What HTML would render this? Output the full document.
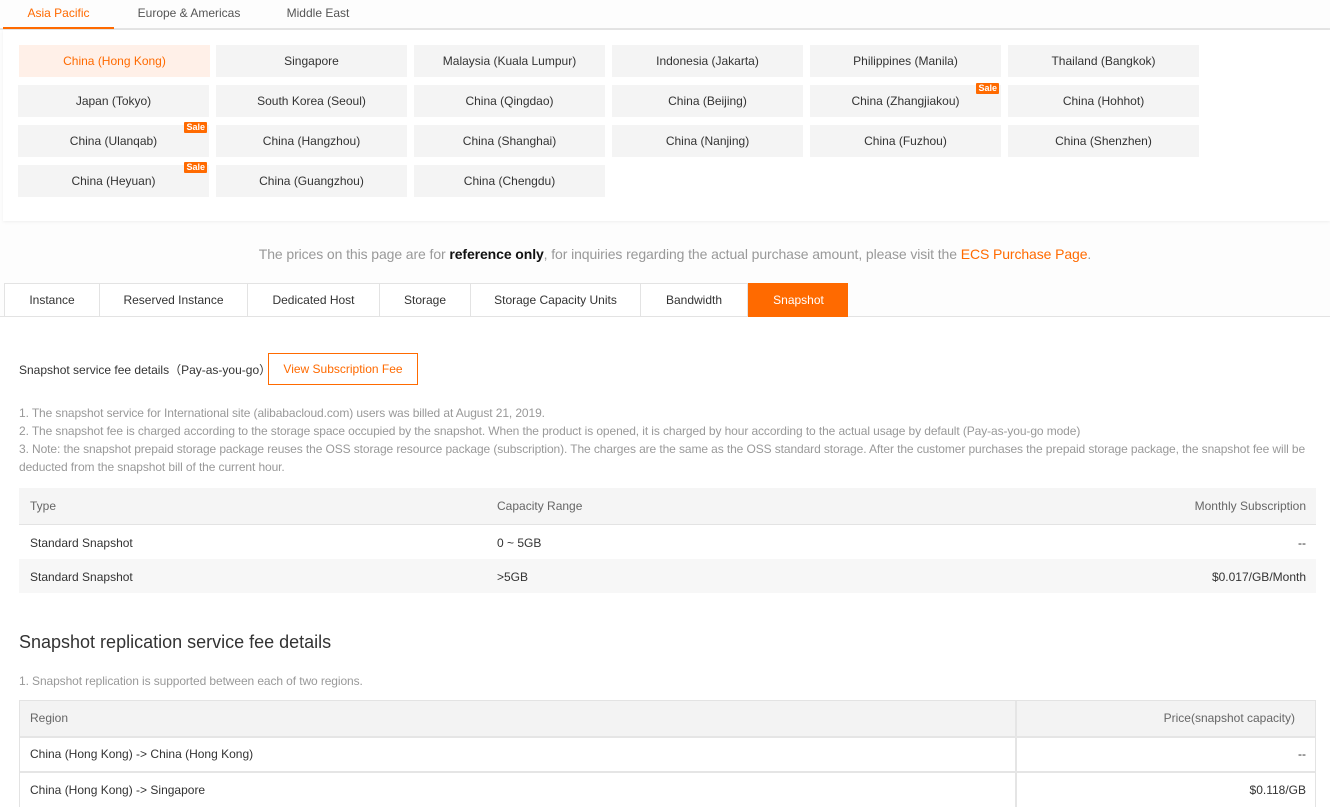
<!DOCTYPE html>
<html><head><meta charset="utf-8"><style>
*{box-sizing:border-box;margin:0;padding:0}
html,body{width:1330px;height:807px;overflow:hidden}
body{background:#fdfdfd;font-family:"Liberation Sans",sans-serif;color:#333;position:relative}
.a{position:absolute}
.rt{top:0;height:28px;font-size:12px;line-height:26px;color:#555;text-align:center}
.btn{position:absolute;width:191px;height:32px;background:#f4f4f4;font-size:12px;line-height:32px;text-align:center;color:#333}
.sale{position:absolute;right:2px;top:-3px;background:#ff6a00;color:#fff;font-size:9px;font-weight:bold;line-height:11px;padding:0 2px;border-radius:1px}
.pt{position:absolute;top:283px;height:34px;border:1px solid #e3e3e3;border-right:none;background:#fff;font-size:12px;line-height:32px;text-align:center;color:#333}
.note{position:absolute;left:19px;font-size:12px;color:#999;line-height:18px;letter-spacing:-0.1px}
</style></head><body>
<div class="a" style="left:0;top:28px;width:1330px;height:2px;background:#e5e5e5"></div>
<div class="a rt" style="left:3px;width:111px;color:#ff6a00">Asia Pacific</div>
<div class="a" style="left:3px;top:27px;width:111px;height:2px;background:#ff6a00"></div>
<div class="a rt" style="left:124px;width:130px">Europe &amp; Americas</div>
<div class="a rt" style="left:270px;width:96px">Middle East</div>
<div class="a" style="left:3px;top:30px;width:1327px;height:191px;background:#fff;box-shadow:0 1px 3px rgba(0,0,0,.06)"></div>

<div class="btn" style="left:19px;top:45px;background:#fff0e8;color:#ff6a00">China (Hong Kong)</div>
<div class="btn" style="left:216px;top:45px">Singapore</div>
<div class="btn" style="left:414px;top:45px">Malaysia (Kuala Lumpur)</div>
<div class="btn" style="left:612px;top:45px">Indonesia (Jakarta)</div>
<div class="btn" style="left:810px;top:45px">Philippines (Manila)</div>
<div class="btn" style="left:1008px;top:45px">Thailand (Bangkok)</div>

<div class="btn" style="left:18px;top:85px">Japan (Tokyo)</div>
<div class="btn" style="left:216px;top:85px">South Korea (Seoul)</div>
<div class="btn" style="left:414px;top:85px">China (Qingdao)</div>
<div class="btn" style="left:612px;top:85px">China (Beijing)</div>
<div class="btn" style="left:810px;top:85px">China (Zhangjiakou)<span class="sale" style="top:-2px">Sale</span></div>
<div class="btn" style="left:1008px;top:85px">China (Hohhot)</div>

<div class="btn" style="left:18px;top:125px">China (Ulanqab)<span class="sale">Sale</span></div>
<div class="btn" style="left:216px;top:125px">China (Hangzhou)</div>
<div class="btn" style="left:414px;top:125px">China (Shanghai)</div>
<div class="btn" style="left:612px;top:125px">China (Nanjing)</div>
<div class="btn" style="left:810px;top:125px">China (Fuzhou)</div>
<div class="btn" style="left:1008px;top:125px">China (Shenzhen)</div>

<div class="btn" style="left:18px;top:165px">China (Heyuan)<span class="sale">Sale</span></div>
<div class="btn" style="left:216px;top:165px">China (Guangzhou)</div>
<div class="btn" style="left:414px;top:165px">China (Chengdu)</div>

<div class="a" style="left:0;width:1350px;top:246px;text-align:center;font-size:14px;color:#999;letter-spacing:-0.1px">The prices on this page are for <b style="color:#111">reference only</b>, for inquiries regarding the actual purchase amount, please visit the <span style="color:#ff6a00">ECS Purchase Page</span>.</div>

<div class="a" style="left:0;top:316px;width:1330px;height:1px;background:#e3e3e3"></div>
<div class="a" style="left:0;top:317px;width:1330px;height:490px;background:#fff"></div>
<div class="pt" style="left:4px;width:95px">Instance</div>
<div class="pt" style="left:99px;width:148px">Reserved Instance</div>
<div class="pt" style="left:247px;width:132px">Dedicated Host</div>
<div class="pt" style="left:379px;width:91px">Storage</div>
<div class="pt" style="left:470px;width:170px">Storage Capacity Units</div>
<div class="pt" style="left:640px;width:108px;border-right:1px solid #e3e3e3">Bandwidth</div>
<div class="pt" style="left:748px;width:100px;background:#ff6a00;border-color:#ff6a00;color:#fff">Snapshot</div>

<div class="a" style="left:19px;top:361px;font-size:12px;color:#333">Snapshot service fee details（Pay-as-you-go）</div>
<div class="a" style="left:268px;top:353px;width:150px;height:32px;border:1px solid #ff6a00;color:#ff6a00;font-size:12px;line-height:30px;text-align:center">View Subscription Fee</div>

<div class="note" style="top:404px;width:1300px">1. The snapshot service for International site (alibabacloud.com) users was billed at August 21, 2019.<br>2. The snapshot fee is charged according to the storage space occupied by the snapshot. When the product is opened, it is charged by hour according to the actual usage by default (Pay-as-you-go mode)<br>3. Note: the snapshot prepaid storage package reuses the OSS storage resource package (subscription). The charges are the same as the OSS standard storage. After the customer purchases the prepaid storage package, the snapshot fee will be deducted from the snapshot bill of the current hour.</div>

<div class="a" style="left:19px;top:488px;width:1297px;height:37px;background:#f5f5f5;border-bottom:1px solid #e3e3e3"></div>
<div class="a" style="left:30px;top:499px;font-size:12px;color:#666">Type</div>
<div class="a" style="left:497px;top:499px;font-size:12px;color:#666">Capacity Range</div>
<div class="a" style="right:24px;top:499px;font-size:12px;color:#666">Monthly Subscription</div>
<div class="a" style="left:30px;top:536px;font-size:12px">Standard Snapshot</div>
<div class="a" style="left:497px;top:536px;font-size:12px">0 ~ 5GB</div>
<div class="a" style="right:24px;top:536px;font-size:12px">--</div>
<div class="a" style="left:19px;top:559px;width:1297px;height:34px;background:#f7f7f7"></div>
<div class="a" style="left:30px;top:570px;font-size:12px">Standard Snapshot</div>
<div class="a" style="left:497px;top:570px;font-size:12px">&gt;5GB</div>
<div class="a" style="right:24px;top:570px;font-size:12px">$0.017/GB/Month</div>

<div class="a" style="left:19px;top:632px;font-size:18px;color:#333">Snapshot replication service fee details</div>
<div class="note" style="top:672px">1. Snapshot replication is supported between each of two regions.</div>

<div class="a" style="left:19px;top:700px;width:1297px;height:107px;border:1px solid #e3e3e3;border-bottom:none"></div>
<div class="a" style="left:20px;top:701px;width:1295px;height:35px;background:#f3f3f3"></div>
<div class="a" style="left:20px;top:736px;width:1295px;height:2px;background:#e5e5e5"></div>
<div class="a" style="left:20px;top:771px;width:1295px;height:2px;background:#e5e5e5"></div>
<div class="a" style="left:1015px;top:701px;width:2px;height:106px;background:#e5e5e5"></div>
<div class="a" style="left:30px;top:711px;font-size:12px;color:#666">Region</div>
<div class="a" style="right:35px;top:711px;font-size:12px;color:#666">Price(snapshot capacity)</div>
<div class="a" style="left:30px;top:747px;font-size:12px">China (Hong Kong) -&gt; China (Hong Kong)</div>
<div class="a" style="right:24px;top:747px;font-size:12px">--</div>
<div class="a" style="left:30px;top:783px;font-size:12px">China (Hong Kong) -&gt; Singapore</div>
<div class="a" style="right:24px;top:783px;font-size:12px">$0.118/GB</div>
</body></html>
